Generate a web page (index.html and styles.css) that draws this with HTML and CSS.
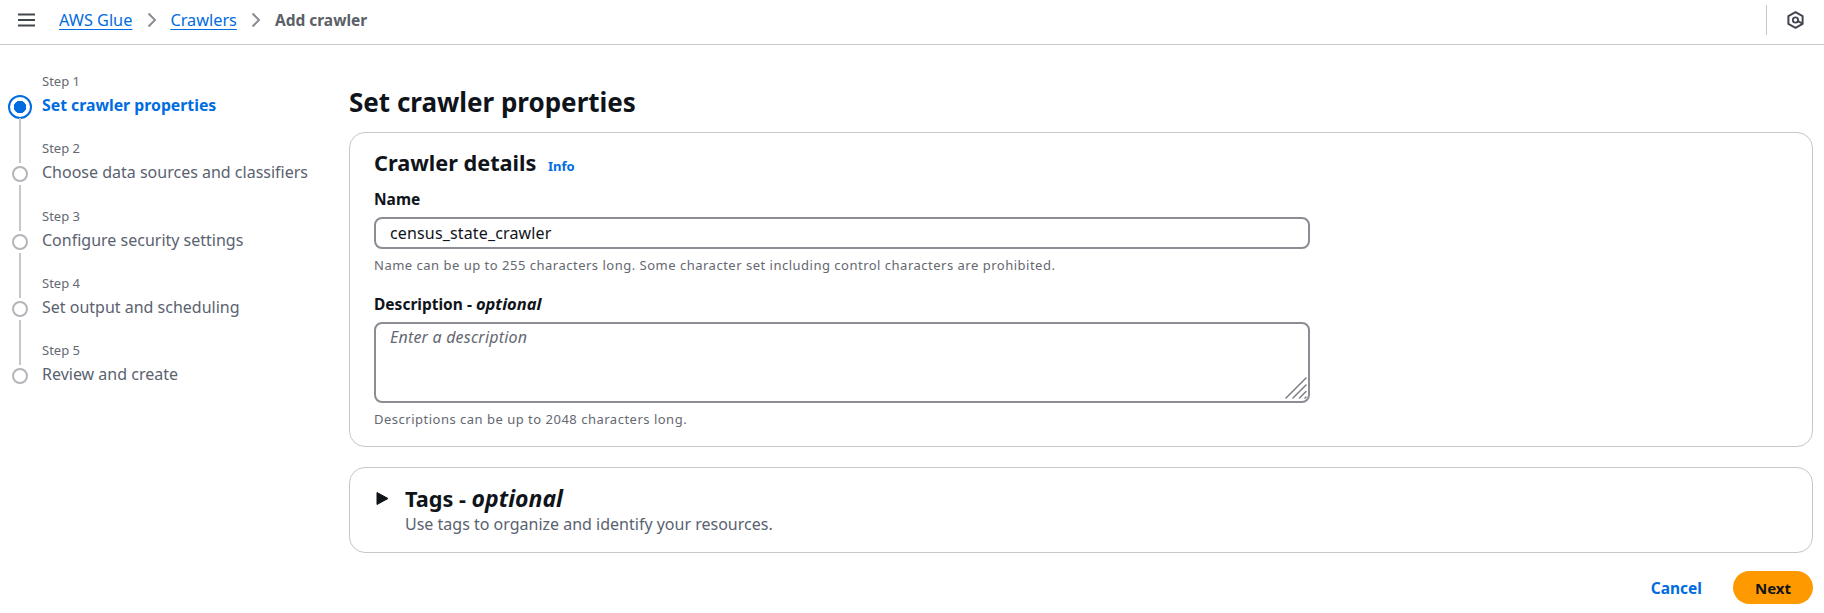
FILE: index.html
```html
<!DOCTYPE html>
<html lang="en">
<head>
<meta charset="utf-8">
<title>Add crawler</title>
<link rel="stylesheet" href="styles.css">
</head>
<body>
<header class="topbar">
  <button class="menu" aria-label="Menu">
    <svg width="18" height="14" viewBox="0 0 18 14"><path d="M0 1.500h17M0 7h17M0 12.500h17" stroke="#424650" stroke-width="2" fill="none"/></svg>
  </button>
  <nav class="crumbs">
    <a href="#">AWS Glue</a>
    <svg class="chev" width="10" height="16" viewBox="0 0 10 16"><path d="M1.500 1.500 8 8l-6.500 6.500" stroke="#8c8c94" stroke-width="2" fill="none"/></svg>
    <a href="#">Crawlers</a>
    <svg class="chev" width="10" height="16" viewBox="0 0 10 16"><path d="M1.500 1.500 8 8l-6.500 6.500" stroke="#8c8c94" stroke-width="2" fill="none"/></svg>
    <span class="current">Add crawler</span>
  </nav>
  <div class="tools">
    <svg width="17" height="18" viewBox="0 0 17 18"><path d="M8.500 1.200 15.600 5.100v7.800L8.500 16.800 1.400 12.900V5.100Z" stroke="#424650" stroke-width="2" fill="none" stroke-linejoin="round"/><circle cx="8.500" cy="9" r="2.700" stroke="#424650" stroke-width="1.800" fill="none"/><path d="M10 9.500 15 12.300" stroke="#424650" stroke-width="2"/></svg>
  </div>
</header>
<div class="layout">
  <ol class="steps">
    <li class="step active">
      <div class="rail"><span class="dot"></span></div>
      <div class="step-text"><small>Step 1</small><strong>Set crawler properties</strong></div>
    </li>
    <li class="step">
      <div class="rail"><i class="line"></i><span class="dot"></span></div>
      <div class="step-text"><small>Step 2</small><span>Choose data sources and classifiers</span></div>
    </li>
    <li class="step">
      <div class="rail"><i class="line"></i><span class="dot"></span></div>
      <div class="step-text"><small>Step 3</small><span>Configure security settings</span></div>
    </li>
    <li class="step">
      <div class="rail"><i class="line"></i><span class="dot"></span></div>
      <div class="step-text"><small>Step 4</small><span>Set output and scheduling</span></div>
    </li>
    <li class="step">
      <div class="rail"><i class="line"></i><span class="dot"></span></div>
      <div class="step-text"><small>Step 5</small><span>Review and create</span></div>
    </li>
  </ol>
  <main class="content">
    <h1>Set crawler properties</h1>
    <section class="card details">
      <h2>Crawler details <a class="info" href="#">Info</a></h2>
      <label class="field-label" for="name">Name</label>
      <input class="control" id="name" type="text" value="census_state_crawler">
      <p class="hint">Name can be up to 255 characters long. Some character set including control characters are prohibited.</p>
      <label class="field-label second" for="desc">Description - <em>optional</em></label>
      <div class="area-wrap">
        <textarea class="control area" id="desc" placeholder="Enter a description"></textarea>
        <svg class="grip" width="22" height="22" viewBox="0 0 22 22"><path d="M1 21 21 1M8 21 21 8M14.500 21 21 14.500M20 21l1-1" stroke="#7d7d85" stroke-width="1.500" stroke-linecap="round" fill="none"/></svg>
      </div>
      <p class="hint">Descriptions can be up to 2048 characters long.</p>
    </section>
    <section class="card tags">
      <svg class="caret" width="13" height="15" viewBox="0 0 13 15"><path d="M1 1.500 12 7.500 1 13.500Z" fill="#0f141a" stroke="#0f141a" stroke-linejoin="round"/></svg>
      <div>
        <h2>Tags - <em>optional</em></h2>
        <p class="sub">Use tags to organize and identify your resources.</p>
      </div>
    </section>
    <div class="actions">
      <a class="cancel" href="#">Cancel</a>
      <button class="next">Next</button>
    </div>
  </main>
</div>
</body>
</html>
```
FILE: styles.css
```css
* { box-sizing: border-box; }
html, body { margin: 0; padding: 0; }
body {
  background: #fff;
  color: #0f141a;
  font-family: "Noto Sans", "Open Sans", sans-serif;
  font-size: 14px;
  height: 613px;
  overflow: hidden;
}
.topbar {
  height: 45px;
  border-bottom: 1px solid #c6c6cd;
  display: flex;
  align-items: center;
  padding: 0 0 4px 18px;
}
.menu { border: 0; background: none; padding: 0; display: flex; margin-right: 23px; }
.crumbs { display: flex; align-items: center; font-size: 16.300px; flex: 1; }
.crumbs a { color: #006ce0; text-decoration: underline; text-underline-offset: 3px; }
.chev { margin: 0 13.500px 0 14.500px; }
.current { color: #5b5f68; font-weight: 700; font-size: 15.500px; }
.tools {
  height: 30px;
  border-left: 1px solid #c6c6cd;
  width: 58px;
  padding-left: 20px;
  display: flex;
  align-items: center;
}
.layout { display: flex; align-items: flex-start; }
.steps { list-style: none; margin: 6px 0 0; padding: 0; width: 349px; flex: none; }
.step { display: flex; height: 67.200px; color: #5a6270; font-size: 16px; }
.rail {
  width: 42px;
  flex: none;
  padding-left: 12px;
  display: flex;
  flex-direction: column;
  justify-content: flex-end;
  align-items: flex-start;
}
.line { display: block; width: 2px; flex: 1; background: #c6c6cd; margin: 0 0 3px 7px; }
.dot { width: 16px; height: 16px; border: 2px solid #b4b4bb; border-radius: 50%; margin-bottom: 3px; flex: none; }
.active .rail { padding-left: 8px; }
.active .dot { width: 24px; height: 24px; border: 2.500px solid #006ce0; background: radial-gradient(circle, #006ce0 6px, #fff 6.500px); margin-bottom: -1px; }
.step-text { display: flex; flex-direction: column; justify-content: flex-end; }
.step-text small { font-size: 13px; line-height: 24px; color: #656871; }
.step-text strong { color: #006ce0; font-weight: 700; line-height: 25px; font-size: 15.800px; }
.step-text span { line-height: 25px; }
.content { flex: 1; padding: 0 11px 0 0; }
h1 { font-size: 26px; font-weight: 700; line-height: 36px; margin: 39px 0 12px; }
.card { border: 1px solid #c6c6cd; border-radius: 16px; background: #fff; }
.details { height: 315px; padding: 16px 24px; margin-bottom: 20px; }
h2 { font-size: 21.700px; font-weight: 700; line-height: 28px; margin: 0; }
.info { font-size: 13px; font-weight: 700; color: #006ce0; text-decoration: none; margin-left: 6px; }
.field-label { display: block; font-weight: 700; font-size: 15.500px; line-height: 20px; margin-top: 9px; }
.field-label em { font-size: 16.500px; }
.field-label.second { margin-top: 21px; }
.control {
  display: block;
  width: 936px;
  border: 2px solid #8c8c94;
  border-radius: 8px;
  font: inherit;
  font-size: 16px;
  letter-spacing: .15px;
  color: #0f141a;
  padding: 0 14px;
  height: 32px;
  margin-top: 8px;
  outline: 0;
  background: #fff;
}
.area-wrap { position: relative; width: 936px; margin-top: 8px; }
.area { height: 81px; padding-top: 3px; resize: none; line-height: 20px; margin: 0; letter-spacing: .2px; }
.area::placeholder { color: #656871; font-style: italic; opacity: 1; }
.grip { position: absolute; right: 3px; bottom: 4px; }
.hint { font-size: 13px; letter-spacing: .5px; line-height: 16px; color: #656871; margin: 8px 0 0; }
.tags { height: 86px; display: flex; padding: 16px 24px 0; }
.caret { margin: 7px 16px 0 2px; flex: none; }
.tags h2 em { font-size: 23px; }
.sub { margin: 1px 0 0; font-size: 16px; line-height: 21px; color: #5a6270; }
.actions { display: flex; justify-content: flex-end; align-items: center; margin-top: 18px; }
.cancel { color: #006ce0; font-weight: 700; font-size: 15.500px; text-decoration: none; margin-right: 31px; }
.next {
  width: 80px;
  height: 33px;
  border: 0;
  border-radius: 20px;
  background: #ff9900;
  color: #0f141a;
  font: inherit;
  font-weight: 700;
  font-size: 15px;
}
```
